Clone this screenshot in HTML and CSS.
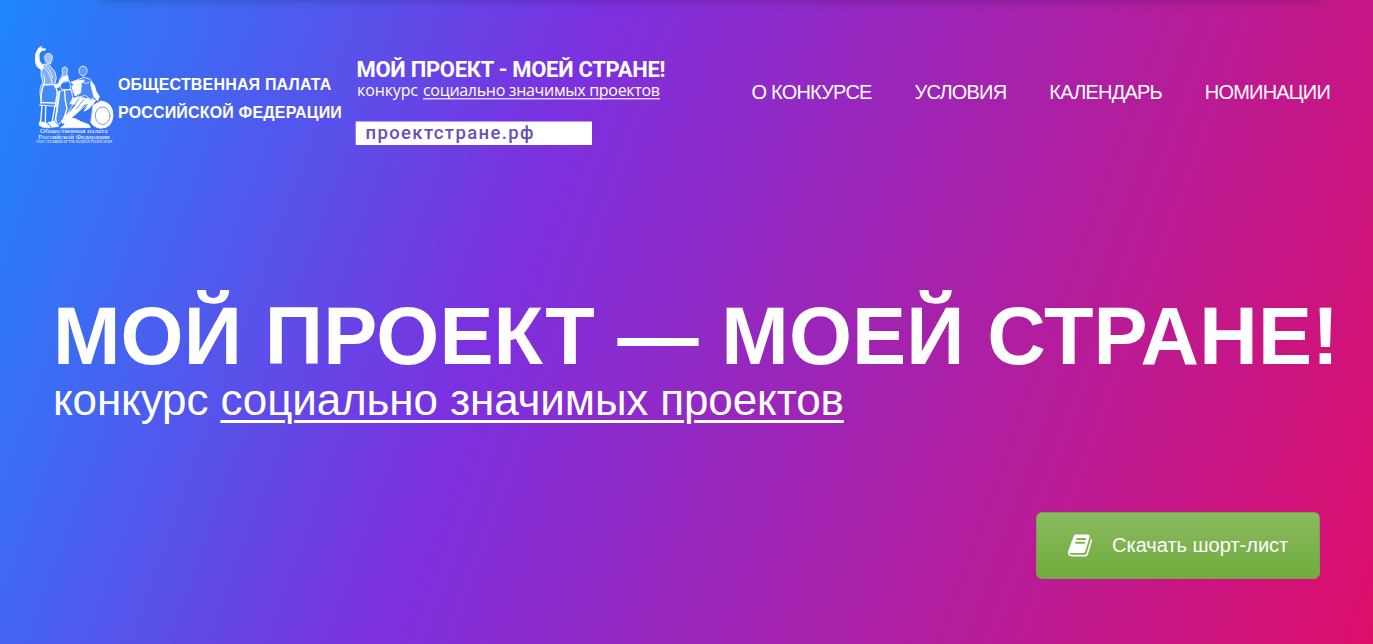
FILE: index.html
```html
<!DOCTYPE html>
<html lang="ru">
<head>
<meta charset="utf-8">
<title>Мой проект — моей стране!</title>
<link rel="stylesheet" href="styles.css">
</head>
<body>
<div class="page">
  <div class="top-shadow"></div>
  <header class="header">
    <a class="emblem">
      <svg class="emblem-art" viewBox="0 0 240 300" width="80" height="100" fill="none" stroke="#fff" stroke-width="2.4" stroke-linecap="round" stroke-linejoin="round">
        <g transform="translate(-2 0) scale(1 1.045)">
        <!-- standing figure -->
        <path fill="#fff" d="M3 25 L12 7 L23 1 L20 8 L33 8 L34 11 L20 14 L14 24 L15 43 L28 58 L23 70 L8 59 L2 42Z"/>
        <path fill="#fff" fill-opacity=".55" d="M31 31 Q34 20 45 22 Q58 26 53 39 L48 52 Q38 53 34 44Z"/>
        <path fill="#fff" fill-opacity=".4" d="M23 55 L32 51 L47 57 L61 73 L66 91 L61 111 L28 113 L20 83Z"/>
        <path d="M25 62Q36 61 45 82T54 111M31 54Q49 64 55 92M24 80Q35 87 29 111"/>
        <path fill="#fff" fill-opacity=".12" d="M21 111 Q14 125 18 143 L22 160 L16 170 L66 173 L72 140 L62 111Z"/>
        <path stroke-width="4" d="M27 112Q19 134 20 160M62 113Q72 130 66 150L64 168M20 162L64 164M23 171L19 218M34 174L33 221M62 171L53 220"/>
        <path fill="#fff" d="M17 217L38 222L48 234L25 233L15 227ZM42 219L60 217L73 231L53 233Z"/>
        <!-- middle figure -->
        <path fill="#fff" fill-opacity=".4" d="M85 76Q79 63 91 60Q104 62 97 78L99 86L83 87Z"/>
        <path fill="#fff" d="M80 91L101 86L102 98L87 101L73 119L60 118L63 111L72 108Z"/>
        <path d="M80 101Q72 114 81 124L108 126Q110 108 104 98M82 105L103 101"/>
        <path fill="#fff" fill-opacity=".15" d="M74 130L109 124L115 144L116 168L98 197L70 229L64 206Z"/>
        <path stroke-width="4" d="M76 131L68 188L60 222M91 129Q91 156 98 180L84 222"/>
        <path fill="#fff" d="M111 103L122 100L151 98L143 106L118 111ZM113 115L141 108L139 134L123 143Z"/>
        <!-- seated figure -->
        <path fill="#fff" fill-opacity=".25" d="M134 70Q136 56 149 58Q161 62 157 77L149 86Q140 87 136 80Z"/>
        <path fill="#fff" fill-opacity=".12" d="M128 97L151 90L168 96L181 116L187 143L170 154L153 142L130 147L112 129Z"/>
        <path d="M142 101Q152 112 164 104"/>
        <path fill="#fff" d="M170 104L178 110L184 128L195 145L190 158L178 144L174 128L170 113Z"/>
        <path fill="#fff" d="M117 149Q143 145 164 152L171 162L151 167L126 194L102 214L88 205L108 188L126 168L108 166Z"/>
        <path d="M126 194Q147 178 165 161"/>
        <path fill="#fff" d="M81 215Q111 197 139 217L164 226L168 234L79 235L92 225ZM173 153L184 156L176 167L162 181L149 187L160 170Z"/>
        <!-- round shield -->
        <path fill="#fff" d="M177 170L200 158Q236 162 236 200Q233 236 199 236Q179 234 170 220Z"/>
        <ellipse cx="205" cy="200" rx="22" ry="25" stroke="#4169ec" stroke-width="2"/>
        <path stroke="#4169ec" stroke-width="2" d="M134 151L119 171M148 154L126 181"/>
        </g>
        <g class="emblem-text" fill="#fff" stroke="none">
          <text x="15" y="262" font-size="19" textLength="203" lengthAdjust="spacingAndGlyphs">Общественная палата</text>
          <text x="10" y="278" font-size="19" textLength="214" lengthAdjust="spacingAndGlyphs">Российской Федерации</text>
          <text x="2" y="290" font-size="10" textLength="230" lengthAdjust="spacingAndGlyphs">CIVIC CHAMBER OF THE RUSSIAN FEDERATION</text>
        </g>
      </svg>
      <span class="emblem-name">ОБЩЕСТВЕННАЯ ПАЛАТА<br>РОССИЙСКОЙ ФЕДЕРАЦИИ</span>
    </a>
    <a class="logo">
      <svg width="320" height="100" viewBox="350 50 320 100" fill="#fff">
        <text class="logo-title" x="356.5" y="77" textLength="309">МОЙ ПРОЕКТ - МОЕЙ СТРАНЕ!</text>
        <text class="logo-sub" x="357" y="96" textLength="61">конкурс</text>
        <text class="logo-sub" x="423" y="96" textLength="237">социально значимых проектов</text>
        <path d="M423 98H660V99.4H423Z" opacity=".75"/>
        <path d="M355.7 121.5H592V145H355.7Z"/>
        <text class="logo-url" x="365.5" y="139" textLength="168">проектстране.рф</text>
      </svg>
    </a>
    <nav class="nav">
      <a>О КОНКУРСЕ</a>
      <a>УСЛОВИЯ</a>
      <a>КАЛЕНДАРЬ</a>
      <a>НОМИНАЦИИ</a>
    </nav>
  </header>
  <main class="hero">
    <h1>МОЙ ПРОЕКТ — МОЕЙ СТРАНЕ!</h1>
    <p class="subtitle">конкурс <u>социально значимых проектов</u></p>
    <a class="button">
      <svg width="24" height="23" viewBox="0 0 1664 1536" fill="#fff"><path d="M1639 350q40 57 18 129l-275 906q-19 64-76.500 107.500T1183 1536H260q-77 0-148.500-53.500T12 1351q-24-67-2-127 0-4 3-27t4-37q1-8-3-21.500t-3-19.500q2-11 8-21t16.500-23.500T52 1051q23-38 45-91.500t30-91.500q3-10 .5-30t-.5-28q3-11 17-28t17-23q21-36 42-92t25-90q1-9-2.500-32t.5-28q4-13 22-30.500t22-22.500q19-26 42.500-84.500T340 283q1-8-3-25.500t-2-26.500q2-8 9-18t18-23 17-21q8-12 16.500-30.500t15-35 16-36 19.500-32T469.500 12t36-11.500T553 6l-1 3q38-9 51-9h761q74 0 114 56t18 130l-274 906q-36 119-71.500 153.500T1022 1280H153q-27 0-38 15-11 16-1 43 24 70 144 70h923q29 0 56-15.500t35-41.500l300-987q7-22 5-57 38 15 59 43zM575 352q-4 13 2 22.500t20 9.500h608q13 0 25.500-9.500T1247 352l21-64q4-13-2-22.500t-20-9.500H638q-13 0-25.500 9.500T596 288zm-83 256q-4 13 2 22.500t20 9.500h608q13 0 25.500-9.500T1164 608l21-64q4-13-2-22.500t-20-9.500H555q-13 0-25.500 9.500T513 544z"/></svg>
      <span>Скачать шорт-лист</span>
    </a>
  </main>
</div>
</body>
</html>
```
FILE: styles.css
```css
* { box-sizing: border-box; }
body { margin: 0; font-family: "Liberation Sans", Arial, sans-serif; color: #fff; }
.page {
  position: relative;
  height: 644px;
  overflow: hidden;
  background: linear-gradient(110deg, #1e87fc 0%, #7b31e0 37%, #e00d66 102%);
}
.top-shadow {
  position: absolute;
  top: -10px;
  left: 100px;
  width: 1222px;
  height: 10px;
  box-shadow: 0 0 10px rgba(0, 0, 0, .25);
}
.header { display: flex; align-items: flex-start; height: 200px; padding: 46px 43px 0 35px; }
.emblem { display: flex; }
.emblem-art { display: block; flex: none; }
.emblem-text { font-family: "Liberation Serif", serif; }
.emblem-name { margin: 25px 0 0 3px; width: 232px; font-size: 16px; line-height: 28px; font-weight: bold; letter-spacing: .17px; white-space: nowrap; }
.logo { margin-top: 4px; }
.logo svg { display: block; }
.logo-title { font: bold 22px Roboto, sans-serif; }
.logo-sub { font: 16px "Open Sans", sans-serif; }
.logo-url { font: 500 18.5px Roboto, sans-serif; fill: #6a50b5; }
.nav { display: flex; gap: 43px; margin: 34px 0 0 auto; font-size: 20px; line-height: 24px; letter-spacing: -.8px; white-space: nowrap; }
.hero { display: flex; flex-direction: column; padding: 90px 53px 0; }
h1 { margin: 0; font-size: 81px; line-height: 92px; font-weight: bold; letter-spacing: .15px; white-space: nowrap; }
.subtitle { margin: -8px 0 0; font-size: 44px; line-height: 52px; letter-spacing: -.13px; white-space: nowrap; }
.subtitle u { text-decoration-thickness: 3px; text-underline-offset: 5px; }
.button {
  align-self: flex-end;
  display: flex;
  align-items: center;
  gap: 20px;
  width: 284px;
  height: 67px;
  margin-top: 86px;
  padding-left: 31px;
  border: 1px solid #7d9f50;
  border-radius: 6px;
  background: linear-gradient(#8aba5f, #6fac3e);
  font-size: 20px;
  white-space: nowrap;
}
```
